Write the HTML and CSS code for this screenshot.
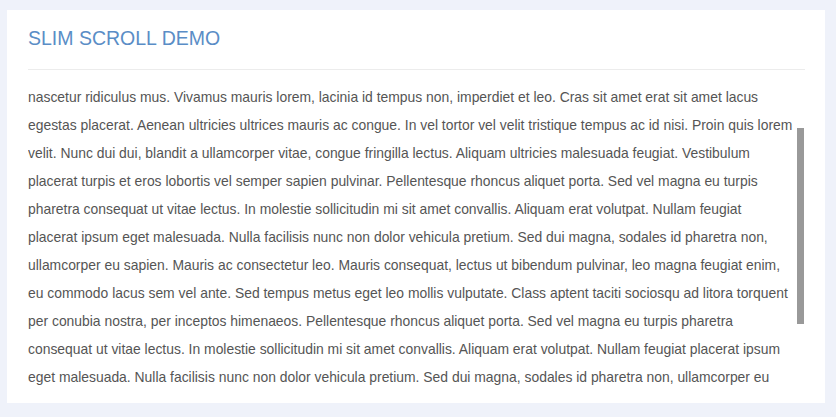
FILE: index.html
```html
<!DOCTYPE html>
<html lang="en">
<head>
    <meta charset="UTF-8">
    <title>Slim Scroll Demo</title>
    <link rel="stylesheet" href="styles.css">
</head>
<body>
    <div class="card">
        <div class="card-header">
            <h2>SLIM SCROLL DEMO</h2>
        </div>

        <div class="slim-wrap">
            <div class="slim-content">
                <p>
                    nascetur ridiculus mus. Vivamus mauris lorem, lacinia id tempus non, imperdiet et leo. Cras sit amet erat sit amet lacus<br>
                    egestas placerat. Aenean ultricies ultrices mauris ac congue. In vel tortor vel velit tristique tempus ac id nisi. Proin quis lorem<br>
                    velit. Nunc dui dui, blandit a ullamcorper vitae, congue fringilla lectus. Aliquam ultricies malesuada feugiat. Vestibulum<br>
                    placerat turpis et eros lobortis vel semper sapien pulvinar. Pellentesque rhoncus aliquet porta. Sed vel magna eu turpis<br>
                    pharetra consequat ut vitae lectus. In molestie sollicitudin mi sit amet convallis. Aliquam erat volutpat. Nullam feugiat<br>
                    placerat ipsum eget malesuada. Nulla facilisis nunc non dolor vehicula pretium. Sed dui magna, sodales id pharetra non,<br>
                    ullamcorper eu sapien. Mauris ac consectetur leo. Mauris consequat, lectus ut bibendum pulvinar, leo magna feugiat enim,<br>
                    eu commodo lacus sem vel ante. Sed tempus metus eget leo mollis vulputate. Class aptent taciti sociosqu ad litora torquent<br>
                    per conubia nostra, per inceptos himenaeos. Pellentesque rhoncus aliquet porta. Sed vel magna eu turpis pharetra<br>
                    consequat ut vitae lectus. In molestie sollicitudin mi sit amet convallis. Aliquam erat volutpat. Nullam feugiat placerat ipsum<br>
                    eget malesuada. Nulla facilisis nunc non dolor vehicula pretium. Sed dui magna, sodales id pharetra non, ullamcorper eu
                </p>
            </div>
            <div class="slim-bar"></div>
        </div>
    </div>
</body>
</html>
```

FILE: styles.css
```css
/* page + card */
* {
    margin: 0;
    padding: 0;
    box-sizing: border-box;
}

body {
    background-color: #eff2fa;
    font-family: "Liberation Sans", Arial, sans-serif;
    color: #555;
}

.card {
    background-color: #fff;
    width: 818px;
    height: 393px;
    margin: 10px 0 0 7px;
    padding: 0 20px 0 21px;
    overflow: hidden;
}

.card-header {
    padding: 16px 0 19px;
    border-bottom: 1px solid #ececec;
}

.card-header h2 {
    font-family: "Liberation Sans", Arial, sans-serif;
    font-size: 19.5px;
    line-height: 24px;
    font-weight: normal;
    color: #5a8dc6;
}

/* slimscroll box */
.slim-wrap {
    position: relative;
    height: 320px;
    margin-top: 13px;
    overflow: hidden;
}

.slim-content p {
    font-size: 13.9px;
    line-height: 28px;
    white-space: nowrap;
}

.slim-bar {
    position: absolute;
    top: 45px;
    right: 1px;
    width: 7px;
    height: 196px;
    background-color: #999;
}
```
